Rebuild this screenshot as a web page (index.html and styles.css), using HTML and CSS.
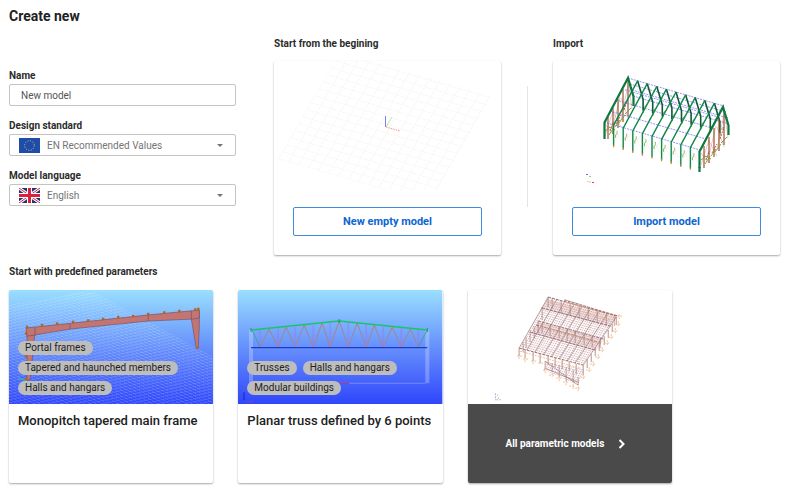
FILE: index.html
```html
<!DOCTYPE html>
<html lang="en">
<head>
    <meta charset="UTF-8">
    <title>Create new</title>
    <link rel="stylesheet" href="styles.css">
</head>
<body>
    <h1>Create new</h1>

    <div class="top">
        <form class="settings">
            <div class="field">
                <label for="name">Name</label>
                <input type="text" id="name" class="control" value="New model">
            </div>
            <div class="field">
                <label for="standard">Design standard</label>
                <div class="pick">
                    <select id="standard" class="control">
                        <option>EN Recommended Values</option>
                    </select>
                    <svg class="flag" viewBox="0 0 21 15">
                        <rect width="21" height="15" fill="#1f4bab"/>
                        <circle cx="10.5" cy="7.5" r="4.8" fill="none" stroke="#d8cf5c" stroke-width="1" stroke-dasharray="1 1.513"/>
                    </svg>
                    <svg class="arrow" viewBox="0 0 6 3"><path d="M0 0h6L3 3z" fill="#757575"/></svg>
                </div>
            </div>
            <div class="field">
                <label for="language">Model language</label>
                <div class="pick">
                    <select id="language" class="control">
                        <option>English</option>
                    </select>
                    <svg class="flag" viewBox="0 0 21 15">
                        <rect width="21" height="15" fill="#21366f"/>
                        <path d="M0 0l21 15M21 0L0 15" stroke="#fff" stroke-width="3"/>
                        <path d="M0 0l21 15M21 0L0 15" stroke="#d8203f" stroke-width="1"/>
                        <path d="M10.500 0v15M0 7.500h21" stroke="#fff" stroke-width="5"/>
                        <path d="M10.500 0v15M0 7.500h21" stroke="#d8203f" stroke-width="3"/>
                    </svg>
                    <svg class="arrow" viewBox="0 0 6 3"><path d="M0 0h6L3 3z" fill="#757575"/></svg>
                </div>
            </div>
        </form>

        <section class="start">
            <h2>Start from the begining</h2>
            <div class="card action">
                <!-- empty work plane -->
                <svg class="scene" viewBox="0 0 227 129">
                    <defs>
                        <pattern id="plane" width="10" height="10" patternUnits="userSpaceOnUse" patternTransform="matrix(1 .29 .4 -.7 4 98)">
                            <path d="M0 .5h10M.5 0v10" stroke="#efefef" stroke-width=".8" stroke-dasharray="1.500 1"/>
                        </pattern>
                    </defs>
                    <path d="M4 98L66-9l152 44-62 107z" fill="url(#plane)"/>
                    <path d="M112 66l6-10" stroke="#a9efa9" stroke-width="1"/>
                    <path d="M111.500 66V55" stroke="#7f7ff2" stroke-width="1"/>
                    <path d="M112 66l14 4" stroke="#ff8f8f" stroke-width="1" stroke-dasharray="1.500 1"/>
                </svg>
                <button type="button" class="btn">New empty model</button>
            </div>
        </section>

        <div class="divider"></div>

        <section class="import">
            <h2>Import</h2>
            <div class="card action">
                <!-- steel hall -->
                <svg class="scene" viewBox="0 0 227 129" fill="none">
                    <defs>
                        <g id="frame">
                            <path d="M75 17l5.500 18.500V47" stroke="#0c5c34" stroke-width="1.600"/>
                            <path d="M75 17L51 61.500V82" stroke="#11874a" stroke-width="1.400"/>
                            <path d="M51 81v2.500" stroke="#c98a3a" stroke-width="1.300"/>
                        </g>
                        <g id="clip">
                            <path d="M54.500 67v3l-1.500 1v3M84 41l-3 3v5" stroke="#79b045" stroke-width=".9"/>
                            <path d="M52 64l7 14M60 64l-8 14" stroke="#e6e6e6" stroke-width=".4"/>
                        </g>
                        <g id="gable">
                            <path d="M52 63l8 10M60 50l-8 25M60 51l8 15M67 36l-7 29M68 37l7 20M75 24l-7 35M76 25l3 23" stroke="#d78f98" stroke-width=".5"/>
                            <path d="M55 56v22M60 47v26M65 38v29M70 29v32M75 19v36" stroke="#94451c" stroke-width="1.100"/>
                            <path d="M52 70l5-4M56 74l5-8M62 66l5-7M66 62l6-8M72 53l6-6M56 66l6 3" stroke="#7f9a2e" stroke-width=".9"/>
                            <path d="M57 70l3-9M63 63l5-9M71 49l4-12" stroke="#a8302f" stroke-width=".8" stroke-dasharray="2 1"/>
                        </g>
                        <path id="endframe" d="M51.500 78V61.500L75 17l5.500 18.500V45" stroke="#0d7840" stroke-width="2.200"/>
                    </defs>
                    <use href="#gable"/>
                    <g stroke="#7777ef" stroke-width=".8" stroke-dasharray="2 1">
                        <path d="M75 17l96 28M77 23l96 28M79 29l96 28M80 35l96 28M69 28l96 28M63 39l96 28M57 50l96 28M51 61l96 28"/>
                    </g>
                    <use href="#clip" x="9.600" y="2.800"/><use href="#clip" x="19.200" y="5.600"/>
                    <use href="#clip" x="28.800" y="8.400"/><use href="#clip" x="38.400" y="11.200"/>
                    <use href="#clip" x="48" y="14"/><use href="#clip" x="57.600" y="16.800"/>
                    <use href="#clip" x="67.200" y="19.600"/><use href="#clip" x="76.800" y="22.400"/>
                    <use href="#clip" x="86.400" y="25.200"/>
                    <use href="#frame" x="9.600" y="2.800"/><use href="#frame" x="19.200" y="5.600"/>
                    <use href="#frame" x="28.800" y="8.400"/><use href="#frame" x="38.400" y="11.200"/>
                    <use href="#frame" x="48" y="14"/><use href="#frame" x="57.600" y="16.800"/>
                    <use href="#frame" x="67.200" y="19.600"/><use href="#frame" x="76.800" y="22.400"/>
                    <use href="#frame" x="86.400" y="25.200"/>
                    <use href="#endframe"/>
                    <use href="#gable" x="96" y="29"/>
                    <use href="#endframe" x="95" y="29"/>
                    <path d="M146.500 106v5" stroke="#0d7840" stroke-width="2.200"/>
                    <path d="M33 113.500h2" stroke="#6b6bf0"/>
                    <path d="M36 115.500h2" stroke="#7be27b"/>
                    <path d="M34 120.500l4 .5" stroke="#f0c4c4"/>
                    <path d="M39 121.500h2" stroke="#ee3b3b"/>
                </svg>
                <button type="button" class="btn">Import model</button>
            </div>
        </section>
    </div>

    <h2>Start with predefined parameters</h2>
    <div class="models">
        <article class="card">
            <div class="preview">
                <svg class="scene" viewBox="0 0 204 114" preserveAspectRatio="xMidYMid slice">
                    <defs>
                        <linearGradient id="sky" x2="0" y2="1">
                            <stop offset="0" stop-color="#9adfff"/>
                            <stop offset=".5" stop-color="#6690fc"/>
                            <stop offset="1" stop-color="#2f46fb"/>
                        </linearGradient>
                        <pattern id="mesh" width="4" height="4" patternUnits="userSpaceOnUse" patternTransform="matrix(1 .54 1 -.22 0 0)">
                            <path d="M0 .5h4M.5 0v4" stroke="#fff" stroke-opacity=".24" stroke-width=".6"/>
                        </pattern>
                    </defs>
                    <rect width="204" height="114" fill="url(#sky)"/>
                    <path d="M0 15L71 2h13l120 65v47H0z" fill="url(#mesh)"/>
                    <g fill="#c27572" stroke="#704a5c" stroke-width=".6">
                        <path d="M18 41l8-2-1 13-4 38h-3z"/>
                        <path d="M181 23l9-2v16l-1 21h-2z"/>
                        <path d="M17 38l121-13 52-5v8l-6 1-45 2-78 8-35 6-8 1z"/>
                        <path d="M26 38v7M61 34v5M139 25v6M182 21v8" fill="none"/>
                    </g>
                    <path d="M18 37v0M33 35v0M48 33.500v0M64 32v0M79 30.500v0M94 29v0M109 27v0M124 26v0M139 24v0M155 22.500v0M170 21v0M186 19.500v0M189 19v0M17 43.500v0M17 66v0M17 89v0M188 58v0" stroke="#b5651a" stroke-width="2.400" stroke-linecap="square"/>
                    <path d="M9 88l9 3" stroke="#28c98a"/>
                </svg>
                <ul class="tags">
                    <li>Portal frames</li>
                    <li>Tapered and haunched members</li>
                    <li>Halls and hangars</li>
                </ul>
            </div>
            <h3>Monopitch tapered main frame</h3>
        </article>

        <article class="card">
            <div class="preview">
                <svg class="scene" viewBox="0 0 204 114" preserveAspectRatio="xMidYMid slice" fill="none">
                    <rect width="204" height="114" fill="url(#sky)"/>
                    <path d="M11 40h4v53h-4zM187 40h4v53h-4z" fill="#fff" fill-opacity=".25"/>
                    <path d="M15 93h172" stroke="#fff" stroke-opacity=".25"/>
                    <path d="M101 93h10" stroke="#a42a9f"/>
                    <path d="M22 40v17M40 38v19M57 37v20M75 35v22M92 33v24M110 33v24M128 35v22M145 37v20M163 38v19M180 40v17" stroke="#9d7be6" stroke-width=".8"/>
                    <path d="M22 57l9-18 9 18 8-20 9 20 9-22 9 22 9-24 8 24 9-26 9 26 9-24 9 24 8-22 9 22 9-20 9 20 9-18 8 18" stroke="#a9828f" stroke-width="1"/>
                    <path d="M14 40l8 17M189 40l-9 17" stroke="#3f9e8e" stroke-width=".9"/>
                    <path d="M13 57.500h176" stroke="#2138cf" stroke-width="1.400"/>
                    <path d="M13 40l88-9 88 9" stroke="#19c566" stroke-width="1.500"/>
                    <path d="M13 38v4M101 29v4M189 38v4" stroke="#239a69"/>
                    <path d="M6 102v8" stroke="#1525b5"/>
                    <path d="M6 111.500h6" stroke="#4f55c8"/>
                    <path d="M12 111.500h3" stroke="#b13aa8"/>
                </svg>
                <ul class="tags">
                    <li>Trusses</li>
                    <li>Halls and hangars</li>
                    <li>Modular buildings</li>
                </ul>
            </div>
            <h3>Planar truss defined by 6 points</h3>
        </article>

        <article class="card">
            <div class="preview">
                <!-- two bay hall with an annex -->
                <svg class="scene" viewBox="0 0 204 114" preserveAspectRatio="xMidYMid slice" fill="none">
                    <defs>
                        <pattern id="purlins" width="2" height="2" patternUnits="userSpaceOnUse" patternTransform="matrix(1 .27 -.6 1 80 7)">
                            <path d="M0 .5h1.300M.5 0v1" stroke="#c39a9c" stroke-width=".5"/>
                        </pattern>
                    </defs>
                    <path d="M80 7l16 5 1-3 53 17-35 49-64-17z" fill="url(#purlins)"/>
                    <path d="M77 71l39 8-6 16-33-15z" fill="url(#purlins)"/>
                    <path d="M79 9l68 18-6 10-67-18zM70 32l66 17-8 12-65-18z" fill="#b98486" fill-opacity=".22"/>
                    <g stroke="#98686b" stroke-width=".6">
                        <path d="M80 7L51 58M89 9L59 60M97 11L67 62M106 14L75 65M114 16L83 67M122 19L91 69M131 21l-32 50M139 24l-32 49M148 27l-33 48"/>
                        <path d="M80 7l68 19M96 10l54 16M74 18l68 18M70 31l66 18M68 35l65 18M62 42l65 18M51 58l64 17" stroke-width=".9" stroke-dasharray="3 1"/>
                        <path d="M80 7v10M74 17v13M70 31v12M66 36v12M62 40v12M58 47v11M55 52v10M84 8v11M93 11v12M102 13v12M111 16v12M120 18v12M129 20v13M138 23v12M146 26v10M74 33v10M82 35v11M91 37v11M99 39v12M107 41v12M116 44v11M124 46v11M132 48v10"/>
                        <path d="M77 71l33 24M77 71v7l33 14M77 78l-1 2M84 73v9M91 75v12M98 77v14M105 80v13M110 95v-8"/>
                    </g>
                    <g stroke="#a97773" stroke-width=".8">
                        <path d="M51 58v8M57 60v8M65 62v9M72 64v9M80 66v9M87 68v9M94 70v9M101 72v9M108 74v10M115 75v10M119 69v9M123 64v8M127 58v8M131 52v9M136 46v9M140 40v8M144 34v8M148 27v8"/>
                    </g>
                    <g stroke="#efb27c" stroke-width=".8" stroke-dasharray="2 1">
                        <path d="M49 66h5M51 64v5M55 69h5M57 67v5M63 71h5M65 69v5M70 73h5M75 80h4M77 78v5M81 85h5M84 83v4M88 88h5M91 86v5M95 92h5M98 90v5M101 96h5M105 94v5M107 98h6M110 96v5M112 87h6M115 84v6M118 80h6M121 77v6M122 74h6M125 71v6M127 67h6M130 64v6M131 60h6M134 57v6M136 53h6M139 50v6M140 47h6M143 44v6M144 41h6M147 38v6M147 34h6M150 31v6M149 26h5M151 24v6M52 61l60 17M95 12l54 15M82 12l60 18M72 36l60 17"/>
                    </g>
                    <path d="M27.500 103v7" stroke="#b3b3e4" stroke-dasharray="2 1"/>
                    <path d="M29 105h1M30 108h1" stroke="#69d69a"/>
                    <path d="M28 109.500h6" stroke="#f2b0b0" stroke-dasharray="2 1"/>
                </svg>
            </div>
            <a href="#" class="all">
                All parametric models
                <svg viewBox="0 0 24 24"><path d="M9.500 8l4 4-4 4" fill="none" stroke="#fff" stroke-width="2"/></svg>
            </a>
        </article>
    </div>
</body>
</html>
```

FILE: styles.css
```css
* {
    box-sizing: border-box;
    margin: 0;
    padding: 0;
}
body {
    padding: 8px 12px 8px 9px;
    background: #fff;
    color: #212121;
    font-family: Roboto, "Liberation Sans", sans-serif;
    font-size: 10px;
}
h1 {
    font-size: 14px;
    line-height: 17px;
    font-weight: 700;
}
h2, label {
    display: block;
    color: #2c2c2c;
    font-size: 10px;
    line-height: 12px;
    font-weight: 700;
}
h2 {
    line-height: 14px;
}

/* top row */
.top {
    display: grid;
    grid-template-columns: 1fr 38px 1fr 52px 1fr;
    margin: 12px 0 10px;
}
.settings {
    grid-column: 1;
    padding-top: 33px;
}
.start {
    grid-column: 3;
}
.import {
    grid-column: 5;
}
.field {
    margin-bottom: 14px;
}
.control {
    display: block;
    width: 100%;
    height: 22px;
    margin-top: 2px;
    padding: 0 11px;
    border: 1px solid #c4c4c4;
    border-radius: 2px;
    background: #fff;
    color: #555;
    font-family: inherit;
    font-size: 10px;
}
.pick {
    position: relative;
}
select.control {
    padding-left: 37px;
    color: #757575;
    appearance: none;
}
.flag {
    position: absolute;
    left: 10px;
    top: 4px;
    width: 21px;
    height: 15px;
}
.arrow {
    position: absolute;
    right: 13px;
    top: 10px;
    width: 6px;
    height: 3px;
}
.divider {
    grid-column: 4;
    justify-self: center;
    width: 1px;
    margin: 49px 0 48px;
    background: #e4e4e4;
}

/* cards */
.card {
    overflow: hidden;
    border-radius: 2px;
    background: #fff;
    box-shadow: 0 1px 2px rgba(0,0,0,0.35);
}
.scene {
    display: block;
    width: 100%;
}
.action {
    margin-top: 10px;
    padding-bottom: 19px;
}
.btn {
    display: block;
    width: calc(100% - 38px);
    height: 29px;
    margin: 17px auto 0;
    border: 1px solid #3d8bdd;
    border-radius: 2px;
    background: #fff;
    color: #0c66d0;
    font-family: inherit;
    font-size: 11px;
    font-weight: 700;
}

/* predefined models */
.models {
    display: grid;
    grid-template-columns: repeat(3, 1fr);
    gap: 25px;
    width: 86%;
    margin-top: 11px;
}
.models .card {
    display: flex;
    flex-direction: column;
    min-height: 193px;
}
.preview {
    position: relative;
}
.tags {
    position: absolute;
    left: 9px;
    right: 9px;
    bottom: 9px;
    display: flex;
    flex-wrap: wrap;
    gap: 6px;
    list-style: none;
}
.tags li {
    padding: 0 7px;
    border-radius: 7px;
    background: #bdbdbd;
    line-height: 14px;
}
h3 {
    padding: 9px;
    font-size: 13px;
    line-height: 16px;
    font-weight: 500;
}
.all {
    flex: 1;
    display: flex;
    align-items: center;
    justify-content: center;
    gap: 6px;
    background: #4a4a4a;
    color: #fff;
    font-weight: 700;
    text-decoration: none;
}
.all svg {
    width: 24px;
    height: 24px;
}
```
